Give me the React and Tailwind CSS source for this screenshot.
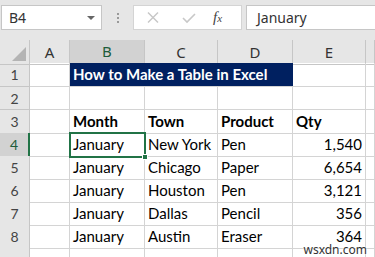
const cols = ["A", "B", "C", "D", "E", ""];

const rows = [
  ["", "January", "New York", "Pen", "1,540"],
  ["", "January", "Chicago", "Paper", "6,654"],
  ["", "January", "Houston", "Pen", "3,121"],
  ["", "January", "Dallas", "Pencil", "356"],
  ["", "January", "Austin", "Eraser", "364"],
];

const grid = "grid grid-cols-[30px_40px_75px_73px_75px_73px_1fr]";
const cell = "border-r border-b border-[#d4d4d4] h-full";
const rowHead =
  "flex items-center justify-center border-r border-b border-[#c6c6c6] bg-[#e6e6e6] text-[14px] text-[#444]";

function Cell({ children, className = "" }) {
  return (
    <div className={`${cell} flex items-center px-[3px] text-[15px] text-black ${className}`}>
      {children}
    </div>
  );
}

export default function App() {
  return (
    <div
      className="relative w-[375px] h-[257px] overflow-hidden bg-white"
      style={{ fontFamily: "Lato, 'Noto Sans', sans-serif" }}
    >
      {/* FORMULA BAR */}
      <div className="h-[40px] bg-[#e6e6e6] pt-[5px] flex items-start" style={{ fontFamily: "'Noto Sans', sans-serif" }}>
        <div className="ml-[1px] w-[101px] h-[25px] bg-white border border-[#c6c6c6] flex items-center justify-between pl-[7px] pr-[6px] text-[14px] text-[#333]">
          <span>B4</span>
          <span className="w-0 h-0 border-l-[4px] border-r-[4px] border-t-[4px] border-l-transparent border-r-transparent border-t-[#666]" />
        </div>
        <div className="w-[31px] h-[25px] flex flex-col items-center justify-center gap-[2px]">
          <span className="w-[2px] h-[2px] bg-[#999]" />
          <span className="w-[2px] h-[2px] bg-[#999]" />
          <span className="w-[2px] h-[2px] bg-[#999]" />
        </div>
        <div className="w-[109px] h-[25px] bg-white border border-[#d4d4d4] flex items-center">
          <svg width="40" height="25" viewBox="0 0 40 25">
            <path d="M14 7.5 L24 17.5 M24 7.5 L14 17.5" stroke="#c8c8c8" strokeWidth="1.5" />
          </svg>
          <svg width="36" height="25" viewBox="0 0 36 25">
            <path d="M9 13 L13 17 L21 9" stroke="#c8c8c8" strokeWidth="1.6" fill="none" />
          </svg>
          <span
            className="ml-[3px] italic text-[15px] text-[#444]"
            style={{ fontFamily: "'Liberation Serif', serif" }}
          >
            f<span className="text-[11px]">x</span>
          </span>
        </div>
        <div className="ml-[4px] flex-1 h-[25px] bg-white border border-[#c6c6c6] border-r-0 flex items-center pl-[10px] text-[14px] text-[#333]">
          January
        </div>
      </div>

      {/* COLUMN HEADERS */}
      <div className={`${grid} h-[23px] bg-[#e6e6e6]`} style={{ fontFamily: "'Noto Sans', sans-serif" }}>
        <div className="relative border-r border-b border-[#c6c6c6]">
          <svg className="absolute right-[3px] bottom-[3px]" width="14" height="14" viewBox="0 0 14 14">
            <path d="M14 0 L14 14 L0 14 Z" fill="#b4b4b4" />
          </svg>
        </div>
        {cols.map((c, i) =>
          c === "B" ? (
            <div
              key={i}
              className="flex items-center justify-center bg-[#d2d2d2] border-r border-[#c6c6c6] border-b-2 border-b-[#217346] text-[15px] text-[#1e5c3a]"
            >
              {c}
            </div>
          ) : (
            <div
              key={i}
              className="flex items-center justify-center border-r border-b border-[#c6c6c6] text-[15px] text-[#333]"
            >
              {c}
            </div>
          )
        )}
      </div>

      {/* ROW 1 */}
      <div className={`${grid} h-[24px]`}>
        <div className={rowHead}>1</div>
        <Cell />
        <div className="col-span-3 bg-[#002060] border-b border-[#d4d4d4] flex items-center px-[3px] text-[15px] font-bold text-white">
          How to Make a Table in Excel
        </div>
        <Cell />
        <Cell />
      </div>

      {/* ROW 2 */}
      <div className={`${grid} h-[23px]`}>
        <div className={rowHead}>2</div>
        <Cell />
        <Cell />
        <Cell />
        <Cell />
        <Cell />
        <Cell />
      </div>

      {/* ROW 3 */}
      <div className={`${grid} h-[23px]`}>
        <div className={rowHead}>3</div>
        <Cell />
        <Cell className="font-bold">Month</Cell>
        <Cell className="font-bold">Town</Cell>
        <Cell className="font-bold">Product</Cell>
        <Cell className="font-bold">Qty</Cell>
        <Cell />
      </div>

      {/* DATA ROWS */}
      {rows.map((r, i) => (
        <div key={i} className={`${grid} h-[23px]`}>
          {i === 0 ? (
            <div className="flex items-center justify-center bg-[#d2d2d2] border-r-2 border-r-[#217346] border-b border-[#c6c6c6] text-[14px] text-[#1e5c3a]">
              {i + 4}
            </div>
          ) : (
            <div className={rowHead}>{i + 4}</div>
          )}
          <Cell />
          {i === 0 ? (
            <div className="relative h-full flex items-center px-[3px] text-[15px] outline-2 outline-[#217346] -outline-offset-1 border-r border-b border-[#d4d4d4]">
              {r[1]}
              <span className="absolute -right-[4px] -bottom-[4px] w-[6px] h-[6px] bg-[#217346] border border-white" />
            </div>
          ) : (
            <Cell>{r[1]}</Cell>
          )}
          <Cell>{r[2]}</Cell>
          <Cell>{r[3]}</Cell>
          <Cell className="justify-end">{r[4]}</Cell>
          <Cell />
        </div>
      ))}

      {/* ROW 9 */}
      <div className={`${grid} h-[23px]`}>
        <div className={`${rowHead} items-start pt-[4px]`}>9</div>
        <Cell />
        <Cell />
        <Cell />
        <Cell />
        <Cell />
        <Cell />
      </div>

      {/* WATERMARK */}
      <span
        className="absolute right-[8px] bottom-[1px] text-[12px] text-[#333] leading-none"
        style={{ fontFamily: "'Noto Sans', sans-serif", textShadow: "0 0 2px #fff, 0 0 2px #fff" }}
      >
        wsxdn.com
      </span>
    </div>
  );
}
